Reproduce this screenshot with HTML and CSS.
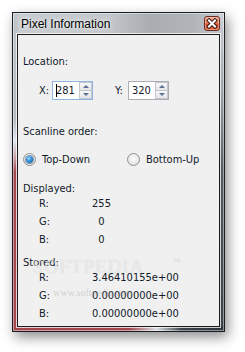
FILE: index.html
```html
<!DOCTYPE html>
<html>
<head>
<meta charset="utf-8">
<link rel="stylesheet" href="styles.css">
</head>
<body>
<div class="window">
  <div class="titlebar">
    <span class="title">Pixel Information</span>
    <span class="close">
      <svg width="14" height="13" viewBox="0 0 14 13">
        <path d="M4 3.5 L10 9.5 M10 3.5 L4 9.5" stroke="#3a1a14" stroke-width="4" stroke-linecap="square"/>
        <path d="M4 3.5 L10 9.5 M10 3.5 L4 9.5" stroke="#ffffff" stroke-width="2" stroke-linecap="square"/>
      </svg>
    </span>
  </div>
  <div class="client">
    <div class="heading">Location:</div>
    <div class="spinrow">
      <span class="axis">X:</span>
      <span class="spin focused">
        <span class="caret"></span><span class="val">281</span>
        <span class="btns"><span class="btn up"></span><span class="btn down"></span></span>
      </span>
      <span class="axis axis-y">Y:</span>
      <span class="spin">
        <span class="val">320</span>
        <span class="btns"><span class="btn up"></span><span class="btn down"></span></span>
      </span>
    </div>
    <div class="heading scan">Scanline order:</div>
    <div class="radios">
      <span class="radio-item"><span class="radio checked"></span>Top-Down</span>
      <span class="radio-item"><span class="radio"></span>Bottom-Up</span>
    </div>
    <div class="heading disp">Displayed:</div>
    <div class="values">
      <span class="lab">R:</span><span class="num"><span class="center">255</span></span>
      <span class="lab">G:</span><span class="num"><span class="center">0</span></span>
      <span class="lab">B:</span><span class="num"><span class="center">0</span></span>
    </div>
    <div class="heading stored">Stored:</div>
    <div class="values">
      <span class="lab">R:</span><span class="num">3.46410155e+00</span>
      <span class="lab">G:</span><span class="num">0.00000000e+00</span>
      <span class="lab">B:</span><span class="num">0.00000000e+00</span>
    </div>
    <div class="watermark"><span class="wm-big">SOFTPEDIA</span><span class="wm-tm">™</span><span class="wm-url">www.softpedia.com</span></div>
  </div>
</div>
</body>
</html>
```

FILE: styles.css
```css
html, body {
  margin: 0;
  padding: 0;
  background: #ffffff;
}
body {
  width: 245px;
  height: 352px;
  overflow: hidden;
}
.window {
  margin: 12px 0 0 12px;
  width: 213px;
  height: 320px;
  box-sizing: border-box;
  border: 1px solid #1b1f25;
  display: flex;
  flex-direction: column;
  box-shadow: 3px 5px 12px rgba(0,0,0,0.45), inset 0 0 0 1px rgba(255,255,255,0.45);
  background:
    linear-gradient(to right, #a4474d 0%, #a4474d 55%, #d9dfe5 68%, #3a434c 80%, #2c343c 100%) bottom / 100% 5px no-repeat,
    linear-gradient(to bottom, #c2c6cb 0%, #b4b9bf 33%, #dde7f1 40%, #c9a6aa 45%, #a4474d 50%, #a4474d 100%) left / 5px 100% no-repeat,
    linear-gradient(to bottom, #cdd0d4 0%, #9ca2a8 25%, #545b63 50%, #3a424a 100%) right / 5px 100% no-repeat,
    linear-gradient(to right, #c8ccd0 0%, #c3c7cb 45%, #a9adb2 65%, #b0b4b9 85%, #c5c8cc 100%);
}
.titlebar {
  height: 21px;
  display: flex;
  align-items: flex-start;
  justify-content: space-between;
  padding: 0 4px 0 8px;
}
.title {
  font-family: "Liberation Sans", Arial, sans-serif;
  font-size: 12px;
  line-height: 19px;
  padding-top: 2px;
  color: #000;
  text-shadow: 0 0 6px rgba(255,255,255,0.95), 0 0 3px rgba(255,255,255,0.8);
}
.close {
  margin-top: 3px;
  width: 16px;
  height: 15px;
  box-sizing: border-box;
  border: 1px solid #6a2c22;
  border-radius: 3px;
  background: linear-gradient(to bottom, #f2ad96 0%, #e8805f 45%, #d2482a 55%, #e0643f 100%);
  box-shadow: inset 0 0 0 1px rgba(255,210,190,0.45);
  display: flex;
  align-items: center;
  justify-content: center;
}
.close svg { display: block; }
.client {
  flex: 1;
  margin: 0 4px 4px 4px;
  border: 1px solid #1c1c1c;
  box-shadow: 0 0 0 1px rgba(255,255,255,0.75);
  background: #f0f0f0;
  padding: 20px 0 0 5px;
  position: relative;
  font-family: "DejaVu Sans", "Liberation Sans", sans-serif;
  font-stretch: condensed;
  font-size: 11px;
  line-height: 13px;
  color: #111a2a;
}
.heading { height: 13px; }
.spinrow {
  margin-top: 13px;
  display: flex;
  align-items: center;
  height: 19px;
}
.axis {
  margin-left: 16px;
  width: 13px;
}
.axis-y { margin-left: 22px; width: 13px; }
.spin {
  width: 41px;
  height: 19px;
  box-sizing: border-box;
  border: 1px solid #abadb3;
  background: #fff;
  display: flex;
  align-items: center;
  padding-left: 3px;
  position: relative;
}
.spin.focused { border-color: #8fb5e0; }
.caret {
  display: inline-block;
  width: 1px;
  height: 13px;
  background: #000;
  margin-right: -1px;
}
.val { flex: 1; }
.btns {
  display: flex;
  flex-direction: column;
  width: 13px;
  height: 17px;
}
.btn {
  flex: 1;
  box-sizing: border-box;
  border: 1px solid #c3c6ca;
  background: linear-gradient(to bottom, #f7f7f7, #e4e5e7);
  position: relative;
}
.btn.up { border-bottom: none; }
.btn::after {
  content: "";
  position: absolute;
  left: 3px;
  top: 2px;
  border-left: 3px solid transparent;
  border-right: 3px solid transparent;
}
.btn.up::after { border-bottom: 3px solid #5a6f93; }
.btn.down::after { border-top: 3px solid #5a6f93; }
.scan { margin-top: 25px; }
.radios {
  margin-top: 15px;
  height: 13px;
  display: grid;
  grid-template-columns: 104px auto;
}
.radio-item {
  display: flex;
  align-items: center;
  gap: 6px;
}
.radio {
  width: 13px;
  height: 13px;
  box-sizing: border-box;
  border-radius: 50%;
  border: 1px solid #8f9296;
  background: radial-gradient(circle at 50% 40%, #fdfdfd 0%, #ececec 50%, #d2d2d2 100%);
  display: flex;
  align-items: center;
  justify-content: center;
}
.radio.checked::after {
  content: "";
  width: 7px;
  height: 7px;
  border-radius: 50%;
  background: radial-gradient(circle at 40% 35%, #9fd8ff 0%, #2f8fd8 45%, #0b4f92 100%);
  box-shadow: 0 0 0 1px rgba(20,60,110,0.5);
}
.disp { margin-top: 16px; }
.values {
  margin-top: 2px;
  display: grid;
  grid-template-columns: 53px auto;
  row-gap: 5px;
  margin-left: 16px;
}
.num { white-space: nowrap; }
.center {
  display: inline-block;
  width: 19px;
  text-align: center;
}
.stored { margin-top: 10px; }
.watermark {
  position: absolute;
  left: 15px;
  top: 222px;
  width: 160px;
  height: 50px;
  pointer-events: none;
  font-family: "Liberation Serif", serif;
  font-stretch: normal;
}
.wm-big {
  position: absolute;
  left: 0;
  top: 0;
  font-size: 19px;
  line-height: 20px;
  letter-spacing: 1px;
  color: rgba(255,255,255,0.6);
  text-shadow: 0 0 1px rgba(120,120,120,0.35);
}
.wm-tm {
  position: absolute;
  left: 140px;
  top: 0;
  font-size: 8px;
  line-height: 10px;
  color: rgba(150,150,150,0.35);
}
.wm-url {
  position: absolute;
  left: 20px;
  top: 30px;
  font-size: 10px;
  line-height: 12px;
  color: rgba(140,140,140,0.35);
}
```
